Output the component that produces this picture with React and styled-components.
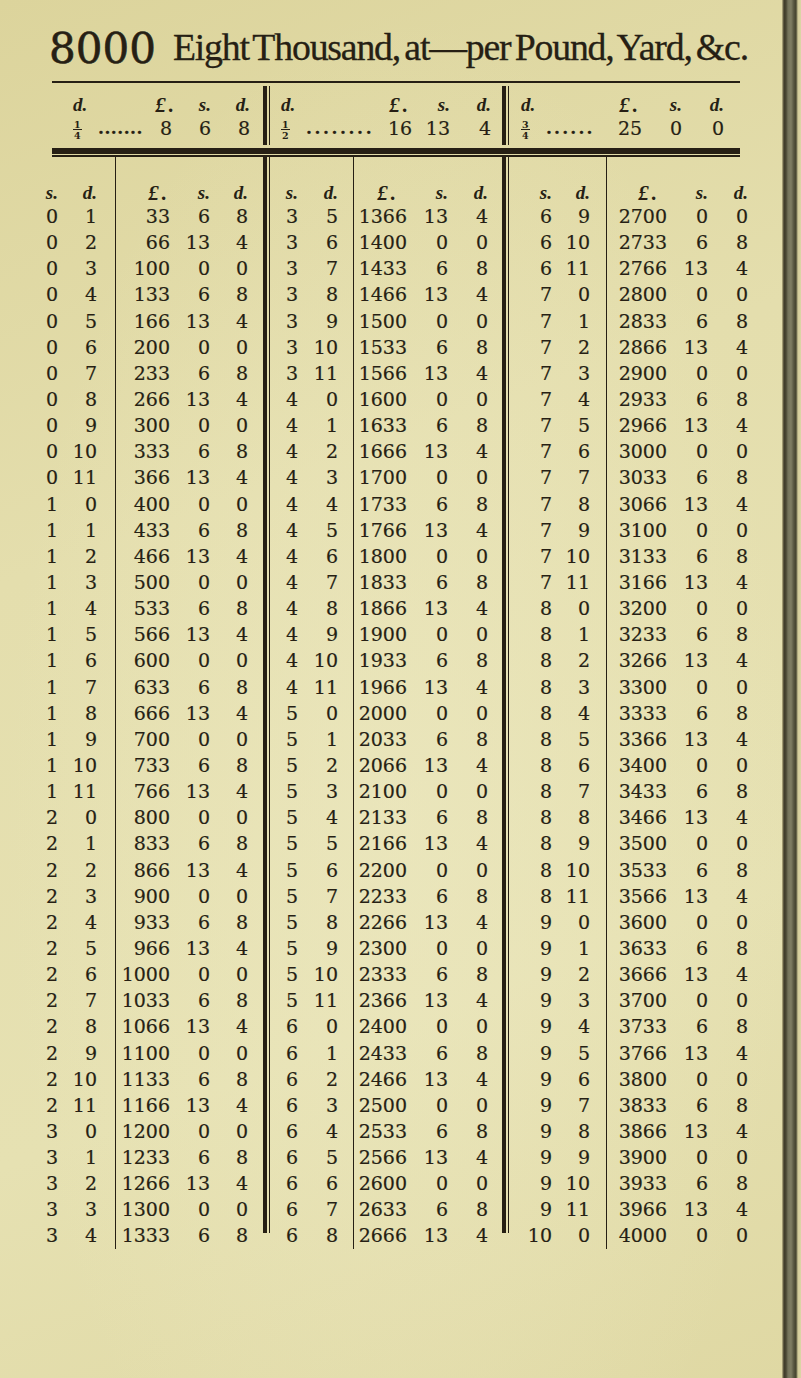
import React from "react";
import styled, { createGlobalStyle } from "styled-components";

const INK = "#261f14";

const GlobalStyle = createGlobalStyle`
  html, body { margin: 0; padding: 0; background: #e5dfae; }
  body { width: 801px; height: 1378px; overflow: hidden; }
`;

const Page = styled.div`
  display: flex;
  width: 801px;
  height: 1378px;
  background:
    radial-gradient(ellipse at 50% 60%, rgba(238, 234, 196, 0.55) 0%, rgba(238, 234, 196, 0) 70%),
    linear-gradient(160deg, #dcd49c 0%, #e4dead 35%, #e6e1b2 70%, #dfd8a3 100%);
  color: ${INK};
  overflow: hidden;
`;

const Sheet = styled.main`
  flex: 1;
  display: flex;
  flex-direction: column;
  padding: 28px 0 0 40px;
`;

const Binding = styled.div`
  flex: none;
  width: 19px;
  background: linear-gradient(
    90deg,
    #c2ba8a 0px,
    #3e3a28 2px,
    #4a4733 4px,
    #74735a 6px,
    #7f7e63 9px,
    #55543e 12px,
    #45442f 14px,
    #8d8a66 15px,
    #d3cd9a 16px,
    #dcd6a6 19px
  );
`;

const TitleRow = styled.header`
  height: 42px;
  font: 42px/42px "DejaVu Serif", serif;
  white-space: nowrap;
`;

const Numeral = styled.span`
  margin-left: 9px;
  -webkit-text-stroke: 0.6px ${INK};
`;

const Heading = styled.span`
  margin-left: 17px;
  font: 37.8px/1 "Liberation Serif", serif;
  letter-spacing: -1.2px;
  word-spacing: -4px;
  vertical-align: 3px;
  -webkit-text-stroke: 0.3px ${INK};
`;

const Rule = styled.div`
  margin: 11px 0 0 12px;
  width: 688px;
  height: 2px;
  background: ${INK};
`;

const HeavyRule = styled.div`
  margin-left: 12px;
  width: 688px;
  height: 1px;
  border-top: 6px solid ${INK};
  border-bottom: 2px solid ${INK};
`;

const Summary = styled.section`
  display: flex;
  height: 65px;
`;

const SumGroup = styled.div`
  box-sizing: border-box;
  flex: none;
  width: ${(p) => p.$w}px;
  padding-left: ${(p) => p.$pl}px;
  display: grid;
  grid-template-columns: ${(p) => p.$cols};
  grid-template-rows: 32px 26px;
`;

const SumHead = styled.div`
  align-self: end;
  text-align: ${(p) => p.$align || "left"};
  font: italic bold ${(p) => (p.$pound ? 21 : 19)}px/20px "Liberation Serif", serif;
  letter-spacing: ${(p) => (p.$pound ? 3 : 0)}px;
  white-space: nowrap;
`;

const SumVal = styled.div`
  display: flex;
  align-items: center;
  justify-content: ${(p) =>
    p.$align === "right" ? "flex-end" : p.$align === "center" ? "center" : "flex-start"};
  padding-left: ${(p) => p.$pl || 0}px;
  font: 19px/26px "DejaVu Serif", serif;
  -webkit-text-stroke: 0.2px ${INK};
  white-space: nowrap;
`;

const Leader = styled.span`
  font: bold 17px/26px "DejaVu Serif", serif;
  letter-spacing: ${(p) => p.$sp}px;
`;

const Frac = styled.span`
  display: inline-flex;
  flex-direction: column;
  align-items: center;
  margin-top: 4px;
  font: bold 9.5px/9px "DejaVu Serif", serif;
  -webkit-text-stroke: 0;
`;

const Denom = styled.span`
  border-top: 1px solid ${INK};
  padding: 1px 1px 0;
`;

const DoubleBar = styled.div`
  flex: none;
  box-sizing: border-box;
  width: 7px;
  border-left: 4px solid ${INK};
  border-right: 1.5px solid ${INK};
  margin: ${(p) => p.$top || 0}px 0 ${(p) => p.$bottom || 0}px;
`;

const Table = styled.section`
  display: flex;
`;

const Group = styled.div`
  flex: none;
  display: flex;
  padding-right: ${(p) => p.$tail || 0}px;
`;

const Col = styled.div`
  box-sizing: border-box;
  flex: none;
  width: ${(p) => p.$w}px;
  padding-right: ${(p) => p.$pr || 0}px;
  display: flex;
  flex-direction: column;
  text-align: right;
  border-left: ${(p) => (p.$ruled ? `1.5px solid ${INK}` : "none")};
`;

const Head = styled.div`
  height: 46px;
  display: flex;
  align-items: flex-end;
  justify-content: flex-end;
  padding-right: ${(p) => p.$pr || 0}px;
  font: italic bold ${(p) => (p.$pound ? 21 : 19)}px/20px "Liberation Serif", serif;
  letter-spacing: ${(p) => (p.$pound ? 3 : 0)}px;
  white-space: nowrap;
`;

const Cell = styled.div`
  height: 26.15px;
  font: 19px/26.15px "DejaVu Serif", serif;
  -webkit-text-stroke: 0.2px ${INK};
  white-space: nowrap;
`;

const rowFor = (p) => {
  const thirds = 100 * p;
  const r = thirds % 3;
  return {
    p,
    s: Math.floor(p / 12),
    d: p % 12,
    L: Math.floor(thirds / 3),
    ss: r === 0 ? 0 : r === 1 ? 6 : 13,
    dd: r === 0 ? 0 : r === 1 ? 8 : 4,
  };
};

const GROUPS = [
  { from: 1, w: [18, 57, 55, 40, 38], pr: 18, tail: 15, headPad: 0 },
  { from: 41, w: [28, 55, 54, 41, 40], pr: 15, tail: 14, headPad: 8 },
  { from: 81, w: [43, 54, 61, 41, 40], pr: 16, tail: 0, headPad: 7 },
];

const SUMMARY = [
  { w: 223, pl: 33, cols: "22px 53px 36px 27px 39px", num: "1", den: "4", dots: ".......", sp: 0.5, vals: [8, 6, 8] },
  { w: 232, pl: 11, cols: "22px 76px 42px 29px 41px", num: "1", den: "2", dots: "........", sp: 2.6, vals: [16, 13, 4] },
  { w: 273, pl: 12, cols: "22px 69px 36px 34px 42px", num: "3", den: "4", dots: "......", sp: 2.2, vals: [25, 0, 0] },
];

function SummaryBlock({ cfg }) {
  return (
    <SumGroup $w={cfg.w} $pl={cfg.pl} $cols={cfg.cols}>
      <SumHead>d.</SumHead>
      <SumHead />
      <SumHead $align="center" $pound>£.</SumHead>
      <SumHead $align="right">s.</SumHead>
      <SumHead $align="right">d.</SumHead>
      <SumVal>
        <Frac>
          <span>{cfg.num}</span>
          <Denom>{cfg.den}</Denom>
        </Frac>
      </SumVal>
      <SumVal $pl={3}>
        <Leader $sp={cfg.sp}>{cfg.dots}</Leader>
      </SumVal>
      <SumVal $align="center">{cfg.vals[0]}</SumVal>
      <SumVal $align="right">{cfg.vals[1]}</SumVal>
      <SumVal $align="right">{cfg.vals[2]}</SumVal>
    </SumGroup>
  );
}

function TableGroup({ cfg }) {
  const rows = Array.from({ length: 40 }, (_, i) => rowFor(cfg.from + i));
  return (
    <Group $tail={cfg.tail}>
      <Col $w={cfg.w[0]}>
        <Head>s.</Head>
        {rows.map((r) => (
          <Cell key={r.p}>{r.s}</Cell>
        ))}
      </Col>
      <Col $w={cfg.w[1]} $pr={cfg.pr}>
        <Head>d.</Head>
        {rows.map((r) => (
          <Cell key={r.p}>{r.d}</Cell>
        ))}
      </Col>
      <Col $w={cfg.w[2]} $ruled>
        <Head $pound $pr={cfg.headPad}>£.</Head>
        {rows.map((r) => (
          <Cell key={r.p}>{r.L}</Cell>
        ))}
      </Col>
      <Col $w={cfg.w[3]}>
        <Head>s.</Head>
        {rows.map((r) => (
          <Cell key={r.p}>{r.ss}</Cell>
        ))}
      </Col>
      <Col $w={cfg.w[4]}>
        <Head>d.</Head>
        {rows.map((r) => (
          <Cell key={r.p}>{r.dd}</Cell>
        ))}
      </Col>
    </Group>
  );
}

export default function App() {
  return (
    <>
      <GlobalStyle />
      <Page>
        <Sheet>
          <TitleRow>
            <Numeral>8000</Numeral>
            <Heading>Eight Thousand, at—per Pound, Yard, &amp;c.</Heading>
          </TitleRow>
          <Rule />
          <Summary>
            <SummaryBlock cfg={SUMMARY[0]} />
            <DoubleBar $top={3} $bottom={3} />
            <SummaryBlock cfg={SUMMARY[1]} />
            <DoubleBar $top={3} $bottom={3} />
            <SummaryBlock cfg={SUMMARY[2]} />
          </Summary>
          <HeavyRule />
          <Table>
            <TableGroup cfg={GROUPS[0]} />
            <DoubleBar $bottom={16} />
            <TableGroup cfg={GROUPS[1]} />
            <DoubleBar $bottom={16} />
            <TableGroup cfg={GROUPS[2]} />
          </Table>
        </Sheet>
        <Binding />
      </Page>
    </>
  );
}
